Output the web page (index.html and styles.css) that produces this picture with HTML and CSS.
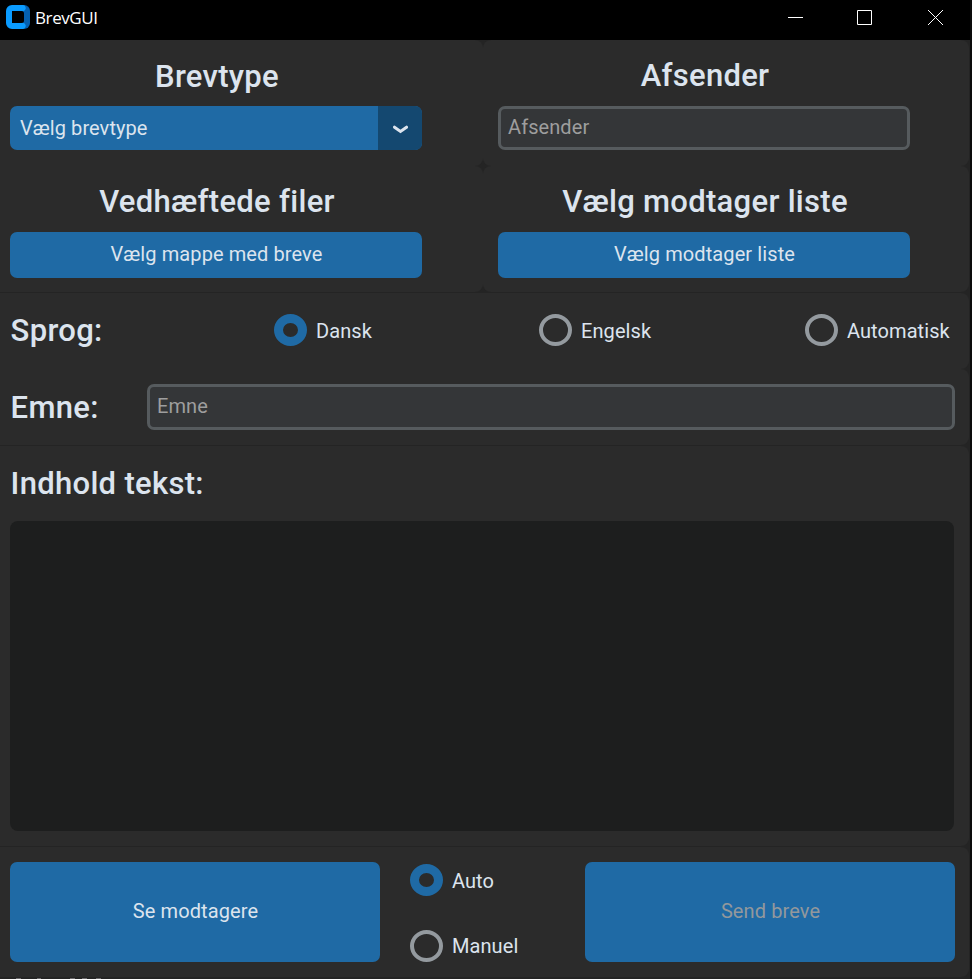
FILE: index.html
```html
<!DOCTYPE html>
<html lang="da">
<head>
<meta charset="utf-8">
<title>BrevGUI</title>
<link rel="stylesheet" href="styles.css">
</head>
<body>
<div class="window">
  <header class="titlebar">
    <svg class="logo" width="24" height="24" viewBox="0 0 24 24"><path d="M15 0h3a6 6 0 0 1 6 6v12a6 6 0 0 1-6 6h-3z" fill="#0560b0"/><path d="M6 0h11a3 3 0 0 1 2 5l-1 1H6v12h12l1 1a3 3 0 0 1-2 5H6a6 6 0 0 1-6-6V6a6 6 0 0 1 6-6z" fill="#0a9bff"/><rect x="6" y="6" width="12" height="12" rx="2.5" fill="#000"/></svg>
    <span class="app-name">BrevGUI</span>
    <div class="controls">
      <svg width="15" height="15" viewBox="0 0 15 15"><path d="M0 7.5h15"/></svg>
      <svg width="15" height="15" viewBox="0 0 15 15"><path d="M.5.5h14v14H.5z"/></svg>
      <svg width="15" height="15" viewBox="0 0 15 15"><path d="M0 0l15 15M15 0L0 15"/></svg>
    </div>
  </header>
  <main>
    <div class="pair">
      <section class="frame card">
        <h2 class="low">Brevtype</h2>
        <div class="select"><span>Vælg brevtype</span><i><svg width="16" height="9" viewBox="0 0 16 9"><path d="M2.5 2.2l6 4.2 6-4.2"/></svg></i></div>
      </section>
      <section class="frame card">
        <h2>Afsender</h2>
        <div class="entry">Afsender</div>
      </section>
      <section class="frame card">
        <h2>Vedhæftede filer</h2>
        <button class="btn">Vælg mappe med breve</button>
      </section>
      <section class="frame card">
        <h2>Vælg modtager liste</h2>
        <button class="btn">Vælg modtager liste</button>
      </section>
    </div>
    <section class="frame language">
      <h2>Sprog:</h2>
      <label class="radio on"><b></b><span>Dansk</span></label>
      <label class="radio"><b></b><span>Engelsk</span></label>
      <label class="radio"><b></b><span>Automatisk</span></label>
    </section>
    <section class="frame subject">
      <h2>Emne:</h2>
      <div class="entry">Emne</div>
    </section>
    <section class="frame content">
      <h2>Indhold tekst:</h2>
      <div class="textbox"></div>
    </section>
    <section class="frame actions">
      <button class="btn">Se modtagere</button>
      <div class="modes">
        <label class="radio on"><b></b><span>Auto</span></label>
        <label class="radio"><b></b><span>Manuel</span></label>
      </div>
      <button class="btn disabled">Send breve</button>
    </section>
    <svg class="edge" width="110" height="1" viewBox="0 0 110 1"><path d="M16 .5h5M37 .5h4M70 .5h5M82 .5h5M96 .5h5"/></svg>
  </main>
</div>
</body>
</html>
```
FILE: styles.css
```css
* { box-sizing: border-box; }
body { margin: 0; width: 972px; height: 979px; overflow: hidden; background: #0c0c0c; font: 20px/24px Roboto, sans-serif; letter-spacing: 0.08px; font-variant-ligatures: none; color: #dce4ee; }
.window { width: 970px; height: 979px; background: #242424; }
.titlebar { height: 40px; background: #000; display: flex; padding: 5px 27px 0 6px; }
.logo { display: block; }
.app-name { margin-left: 5px; font: 17px/26px "Open Sans", sans-serif; color: #fff; letter-spacing: -0.4px; }
.controls { margin: 5px 0 0 auto; display: flex; gap: 54px; }
.controls svg:nth-child(2) { margin: 0 2px 0 0; }
.controls svg { fill: none; stroke: #fff; stroke-width: 1; }
h2 { margin: 0; padding-left: 0.6px; font-size: 31px; line-height: 36px; font-weight: 500; letter-spacing: 0.3px; white-space: nowrap; }
.frame { background: #2b2b2b; border-radius: 0 8px 8px 0; }
main { width: 969px; }
.pair { display: grid; grid-template-columns: 483px 486px; grid-template-rows: 126px 126px; margin-bottom: 1px; }
.card { padding: 18px 0 0 10px; border-radius: 8px; }
.card:nth-child(odd) { border-radius: 0 8px 8px 0; }
.card:nth-child(even) { padding-left: 15px; }
.card h2 { width: 412px; padding-left: 2px; text-align: center; margin-bottom: 12px; }
.card h2.low { padding-top: 1px; margin-bottom: 11px; }
.select { width: 412px; height: 44px; border-radius: 7px; overflow: hidden; background: #1f6aa5; display: flex; }
.select span { flex: 1; padding: 10px 0 0 10px; }
.select i { width: 44px; background: #144870; padding: 19px 0 0 14px; }
.select svg { display: block; fill: none; stroke: #dce4ee; stroke-width: 3; stroke-linecap: round; }
.entry { width: 412px; height: 44px; border: 3px solid #565b5e; border-radius: 7px; background: #343638; color: #9e9e9e; padding: 6px 7px; }
.btn { display: block; width: 412px; height: 46px; border: 0; border-radius: 7px; padding: 0 0 2px 1px; background: #1f6aa5; color: #dce4ee; font: inherit; letter-spacing: 0.1px; }
.disabled { color: #93989c; }
.radio { display: flex; align-items: center; gap: 9px; height: 32px; }
.radio b { width: 33px; height: 32px; border-radius: 50%; border: 4px solid #949a9f; }
.radio.on b { border: 9px solid #1f6aa5; }
.radio span { padding-top: 2px; }
.language { height: 76px; display: grid; grid-template-columns: 264px 265px 266px 1fr; padding: 21px 0 0 10px; }
.language h2 { line-height: 34px; }
.subject { height: 76px; display: flex; margin-bottom: 1px; padding: 15px 0 0 10px; }
.subject h2 { width: 137px; line-height: 48px; }
.subject .entry { width: 808px; height: 46px; padding-top: 7px; }
.content { height: 400px; margin-bottom: 1px; padding: 20px 0 0 10px; }
.textbox { width: 944px; height: 310px; margin-top: 19px; border-radius: 8px; background: #1d1e1e; }
.actions { height: 130px; display: flex; padding: 15px 0 0 10px; }
.actions .btn { width: 370px; height: 100px; }
.modes { width: 205px; padding: 2px 0 0 30px; display: grid; grid-template-rows: 66px 32px; align-items: start; }
.modes .radio:last-child span { padding-top: 0; }
.edge { display: block; margin-top: 1px; stroke: #6c6a6c; }
```
